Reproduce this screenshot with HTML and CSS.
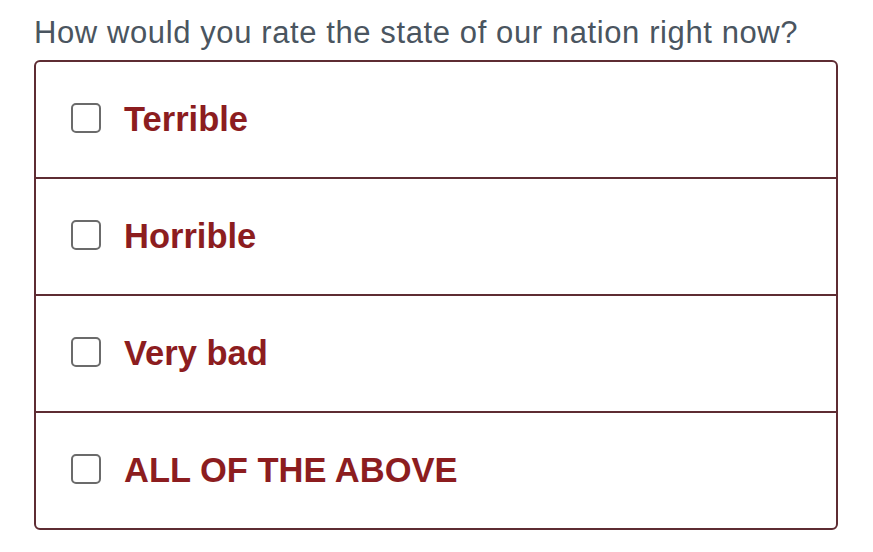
FILE: index.html
```html
<!DOCTYPE html>
<html>
<head>
<meta charset="utf-8">
<link rel="stylesheet" href="styles.css">
</head>
<body>
<div class="survey">
  <p class="question">How would you rate the state of our nation right now?</p>
  <div class="options">
    <label class="option"><span class="box"></span><span class="text">Terrible</span></label>
    <label class="option"><span class="box"></span><span class="text">Horrible</span></label>
    <label class="option"><span class="box"></span><span class="text">Very bad</span></label>
    <label class="option"><span class="box"></span><span class="text">ALL OF THE ABOVE</span></label>
  </div>
</div>
</body>
</html>
```
FILE: styles.css
```css
html, body {
  margin: 0;
  padding: 0;
  background: #ffffff;
}
.survey {
  padding: 14px 0 0 34px;
  width: 804px;
  font-family: "Liberation Sans", Arial, sans-serif;
}
.question {
  margin: 0 0 8px 0;
  font-size: 31px;
  letter-spacing: 0.6px;
  line-height: 38px;
  color: #4a5560;
}
.options {
  border: 2px solid #5e2c33;
  border-radius: 6px;
  display: flex;
  flex-direction: column;
  margin-top: 1px;
}
.option {
  height: 115px;
  display: flex;
  align-items: center;
  padding-left: 35px;
  border-top: 2px solid #5e2c33;
}
.option:first-child {
  border-top: none;
}
.box {
  width: 30px;
  height: 30px;
  border: 2px solid #6b6b6b;
  border-radius: 5px;
  box-sizing: border-box;
  margin-right: 23px;
  margin-top: -4px;
}
.text {
  font-size: 34.5px;
  font-weight: bold;
  color: #8c1d1f;
}
```
